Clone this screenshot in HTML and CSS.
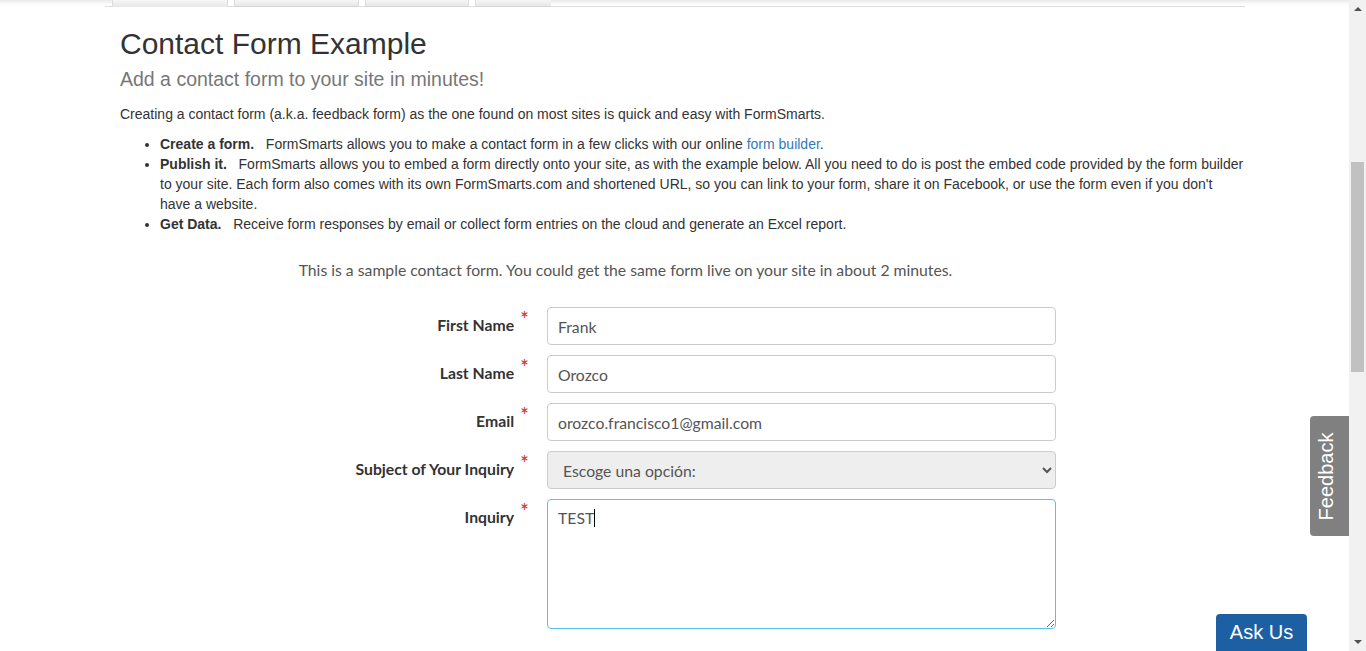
FILE: index.html
```html
<!DOCTYPE html>
<html lang="en">
<head>
<meta charset="utf-8">
<title>Contact Form Example</title>
<link rel="stylesheet" href="styles.css">
</head>
<body>
<div class="window">
  <main class="main">
    <div class="container">
      <div class="tabbar">
        <span class="tab-corner"></span>
        <span class="tab tab-active"></span>
        <span class="tab-sep"></span>
        <span class="tab tab-w1"></span>
        <span class="tab-sep"></span>
        <span class="tab tab-w2"></span>
        <span class="tab-sep"></span>
        <span class="tab tab-w3"></span>
        <span class="tab-rest"></span>
      </div>
      <div class="content">
        <h1 class="title">Contact Form Example</h1>
        <h2 class="subtitle">Add a contact form to your site in minutes!</h2>
        <p class="intro">Creating a contact form (a.k.a. feedback form) as the one found on most sites is quick and easy with FormSmarts.</p>
        <ul class="features">
          <li><b>Create a form.</b>&nbsp;&nbsp; FormSmarts allows you to make a contact form in a few clicks with our online <a href="#">form builder</a>.</li>
          <li><b>Publish it.</b>&nbsp;&nbsp; FormSmarts allows you to embed a form directly onto your site, as with the example below. All you need to do is post the embed code provided by the form builder to your site. Each form also comes with its own FormSmarts.com and shortened URL, so you can link to your form, share it on Facebook, or use the form even if you don't have a website.</li>
          <li><b>Get Data.</b>&nbsp;&nbsp; Receive form responses by email or collect form entries on the cloud and generate an Excel report.</li>
        </ul>
        <form class="form">
          <p class="form-note">This is a sample contact form. You could get the same form live on your site in about 2 minutes.</p>
          <div class="row">
            <label class="label">First Name<span class="req">*</span></label>
            <input class="field" type="text" value="Frank">
          </div>
          <div class="row">
            <label class="label">Last Name<span class="req">*</span></label>
            <input class="field" type="text" value="Orozco">
          </div>
          <div class="row">
            <label class="label">Email<span class="req">*</span></label>
            <input class="field" type="text" value="orozco.francisco1@gmail.com">
          </div>
          <div class="row">
            <label class="label">Subject of Your Inquiry<span class="req">*</span></label>
            <select class="field select"><option>Escoge una opción:</option></select>
          </div>
          <div class="row">
            <label class="label">Inquiry<span class="req">*</span></label>
            <div class="area-wrap">
              <textarea class="field area">TEST</textarea>
              <span class="caret"></span>
            </div>
          </div>
        </form>
      </div>
    </div>
    <div class="feedback"><span>Feedback</span></div>
    <div class="askus">Ask Us</div>
  </main>
  <div class="scrollbar">
    <span class="arrow arrow-up"></span>
    <div class="track"><div class="thumb"></div></div>
    <span class="arrow arrow-down"></span>
  </div>
</div>
</body>
</html>
```
FILE: styles.css
```css
html, body {
  margin: 0;
  padding: 0;
  height: 100%;
  overflow: hidden;
  background: #fff;
}
body {
  font-family: "Liberation Sans", Arial, sans-serif;
  color: #333;
}
.window {
  display: flex;
  height: 100vh;
}
.main {
  flex: 1;
  position: relative;
  overflow: hidden;
  background: linear-gradient(#e9e9e9 0, #fbfbfb 4px, #fff 7px);
}
.container {
  width: 1140px;
  margin-left: 105px;
}
.tabbar {
  display: flex;
  height: 7px;
}
.tabbar > span {
  box-sizing: border-box;
  height: 7px;
}
.tab-corner {
  width: 8px;
  border-bottom: 1px solid #ddd;
  border-right: 1px solid #ddd;
  height: 7px;
}
.tab-active {
  width: 114px;
  background: linear-gradient(#f0f0f0, #fff);
}
.tab-sep {
  width: 8px;
  border: 1px solid #ddd;
  border-top: 0;
  background: #fff;
}
.tab {
  border-bottom: 1px solid #d6d6d6;
  background: linear-gradient(#f6f6f6, #e7e7e7);
}
.tab-active { border-bottom: 0; }
.tab-w1 { width: 123px; }
.tab-w2 { width: 102px; }
.tab-w3 { width: 75px; }
.tab-rest {
  flex: 1;
  border-bottom: 1px solid #ddd;
}
.content {
  padding: 0 0 0 15px;
}
.title {
  font-size: 30px;
  font-weight: 400;
  line-height: 33px;
  margin: 20px 0 8px;
  color: #333;
}
.subtitle {
  font-size: 19.5px;
  font-weight: 400;
  line-height: 22px;
  margin: 0 0 14px;
  color: #777;
}
.intro {
  font-size: 14px;
  line-height: 20px;
  margin: 0 0 10px;
}
.features {
  font-size: 14px;
  line-height: 20px;
  margin: 0 -1px 10px 0;
  padding-left: 40px;
}
.features b { font-weight: 700; }
.features a {
  color: #337ab7;
  text-decoration: none;
}
.form {
  width: 861px;
  margin: 26px 0 0 75px;
  font-family: Lato, "Liberation Sans", sans-serif;
}
.form-note {
  text-align: center;
  font-size: 15.75px;
  line-height: 20px;
  color: #555;
  margin: 0 0 27px;
}
.row {
  display: grid;
  grid-template-columns: 352px 509px;
  margin-bottom: 10px;
}
.label {
  text-align: right;
  padding: 8px 18px 0 0;
  font-size: 15.75px;
  line-height: 20px;
  font-weight: 700;
  color: #333;
}
.req {
  color: #d9261c;
  font-weight: 400;
  font-size: 21px;
  margin-left: 6px;
  position: relative;
  top: -4px;
  line-height: 0;
}
.field {
  box-sizing: border-box;
  width: 509px;
  height: 38px;
  padding: 6px 10px;
  border: 1px solid #ccc;
  border-radius: 4px;
  font-family: Lato, "Liberation Sans", sans-serif;
  font-size: 15.75px;
  color: #555;
  background: #fff;
  margin: 0;
}
.select {
  background: #eee;
  padding-left: 11px;
  color: #555;
}
.area-wrap {
  position: relative;
}
.area {
  display: block;
  height: 130px;
  border-color: #5bc2e7;
  padding-top: 8px;
  resize: vertical;
  outline: none;
}
.caret {
  position: absolute;
  left: 47px;
  top: 10px;
  width: 1px;
  height: 18px;
  background: #000;
}
.feedback {
  position: absolute;
  right: 0;
  top: 416px;
  width: 39px;
  height: 120px;
  box-sizing: border-box;
  padding-right: 6px;
  background: #808080;
  border-radius: 4px 0 0 4px;
  display: flex;
  align-items: center;
  justify-content: center;
}
.feedback span {
  transform: rotate(-90deg);
  color: #fff;
  font-size: 20px;
  white-space: nowrap;
}
.askus {
  position: absolute;
  left: 1216px;
  top: 614px;
  width: 91px;
  height: 44px;
  box-sizing: border-box;
  padding-top: 7px;
  background: #1c60a3;
  color: #fff;
  font-size: 20px;
  text-align: center;
  border-radius: 4px 4px 0 0;
}
.scrollbar {
  width: 17px;
  background: #f1f1f1;
  display: flex;
  flex-direction: column;
  align-items: center;
}
.arrow {
  width: 0;
  height: 0;
  border-left: 4px solid transparent;
  border-right: 4px solid transparent;
  margin: 6px 0;
}
.arrow-up {
  border-bottom: 4px solid #505050;
  margin-top: 7px;
}
.arrow-down {
  border-top: 4px solid #505050;
  margin-bottom: 7px;
}
.track {
  flex: 1;
  width: 100%;
  padding-top: 145px;
  box-sizing: border-box;
  display: flex;
  justify-content: center;
}
.thumb {
  width: 13px;
  height: 210px;
  background: #c1c1c1;
}
```
